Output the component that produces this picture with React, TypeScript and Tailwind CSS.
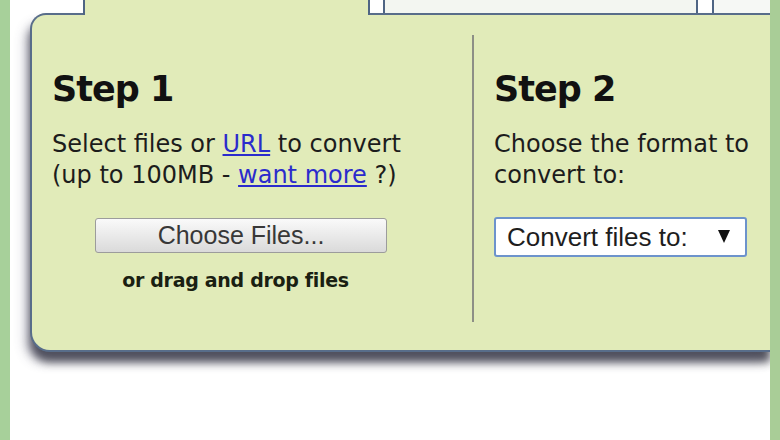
export default function App() {
  return (
    <div className="w-[780px] h-[440px] bg-white flex overflow-hidden font-['DejaVu_Sans',Verdana,sans-serif] text-[#1c1c1c]">
      {/* left page strip */}
      <div className="w-[10px] shrink-0 bg-[#a7d09a]" />

      <div className="flex-1 flex flex-col pl-[20px]">
        {/* tab row */}
        <div className="h-[13px] flex relative z-10">
          <div className="w-[53px]" />
          <div className="w-[287px] h-[15px] bg-[#e1ebb9] border-x-2 border-[#4f6584]" />
          <div className="w-[13px]" />
          <div className="w-[315px] bg-[#f3f6f1] border-x-2 border-[#4f6584]" />
          <div className="w-[14px]" />
          <div className="flex-1 bg-[#f6f8f5] border-l-2 border-[#4f6584]" />
        </div>

        {/* step panel */}
        <div className="h-[339px] flex bg-[#e1ebb9] border-l-2 border-t-2 border-b-2 border-[#586d8a] rounded-tl-[16px] rounded-bl-[20px] shadow-[-5px_10px_12px_rgba(70,70,100,0.3),0_10px_9px_rgba(30,30,40,0.75)]">
          <div className="w-[440px] shrink-0 pl-[20px] pt-[54px]">
            <h2 className="text-[35px] leading-[40px] font-bold tracking-[-1px] text-[#111]">Step 1</h2>
            <p className="mt-[20px] text-[24px] leading-[31px]">
              Select files or <span className="text-[#2b2bcc] underline underline-offset-2">URL</span> to convert
              <br />
              (up to 100MB - <span className="text-[#2b2bcc] underline underline-offset-2">want more</span> ?)
            </p>
            <div className="ml-[43px] w-[292px]">
              <button className="mt-[27px] w-full h-[35px] rounded-[3px] border-[1.5px] border-[#9c9c9c] bg-gradient-to-b from-[#fafafa] to-[#dadada] text-[25px] leading-none text-[#383838] font-['Liberation_Sans',Arial,sans-serif]">
                Choose Files...
              </button>
              <p className="mt-[15px] pr-[11px] text-center text-[19px] leading-[24px] font-bold tracking-[-0.3px] text-[#1a1f12]">
                or drag and drop files
              </p>
            </div>
          </div>

          <div className="w-[2px] h-[287px] mt-[20px] bg-[#8d8f86]" />

          <div className="flex-1 pl-[20px] pt-[54px]">
            <h2 className="text-[35px] leading-[40px] font-bold tracking-[-1px] text-[#111]">Step 2</h2>
            <p className="mt-[20px] text-[24px] leading-[31px]">
              Choose the format to
              <br />
              convert to:
            </p>
            <div className="mt-[26px] w-[253px] h-[40px] flex items-center justify-between pl-[11px] pr-[15px] bg-white border-2 border-[#6d93cc] rounded-[3px] font-['Liberation_Sans',Arial,sans-serif] text-[26px] leading-none text-[#1e1e1e]">
              <span>Convert files to:</span>
              <svg width="12" height="13" viewBox="0 0 12 13" className="mb-[2px]">
                <polygon points="0,0 12,0 6,13" fill="#111" />
              </svg>
            </div>
          </div>
        </div>
      </div>

      {/* right page strip */}
      <div className="w-[10px] shrink-0 bg-[#a9cd97]" />
    </div>
  )
}
